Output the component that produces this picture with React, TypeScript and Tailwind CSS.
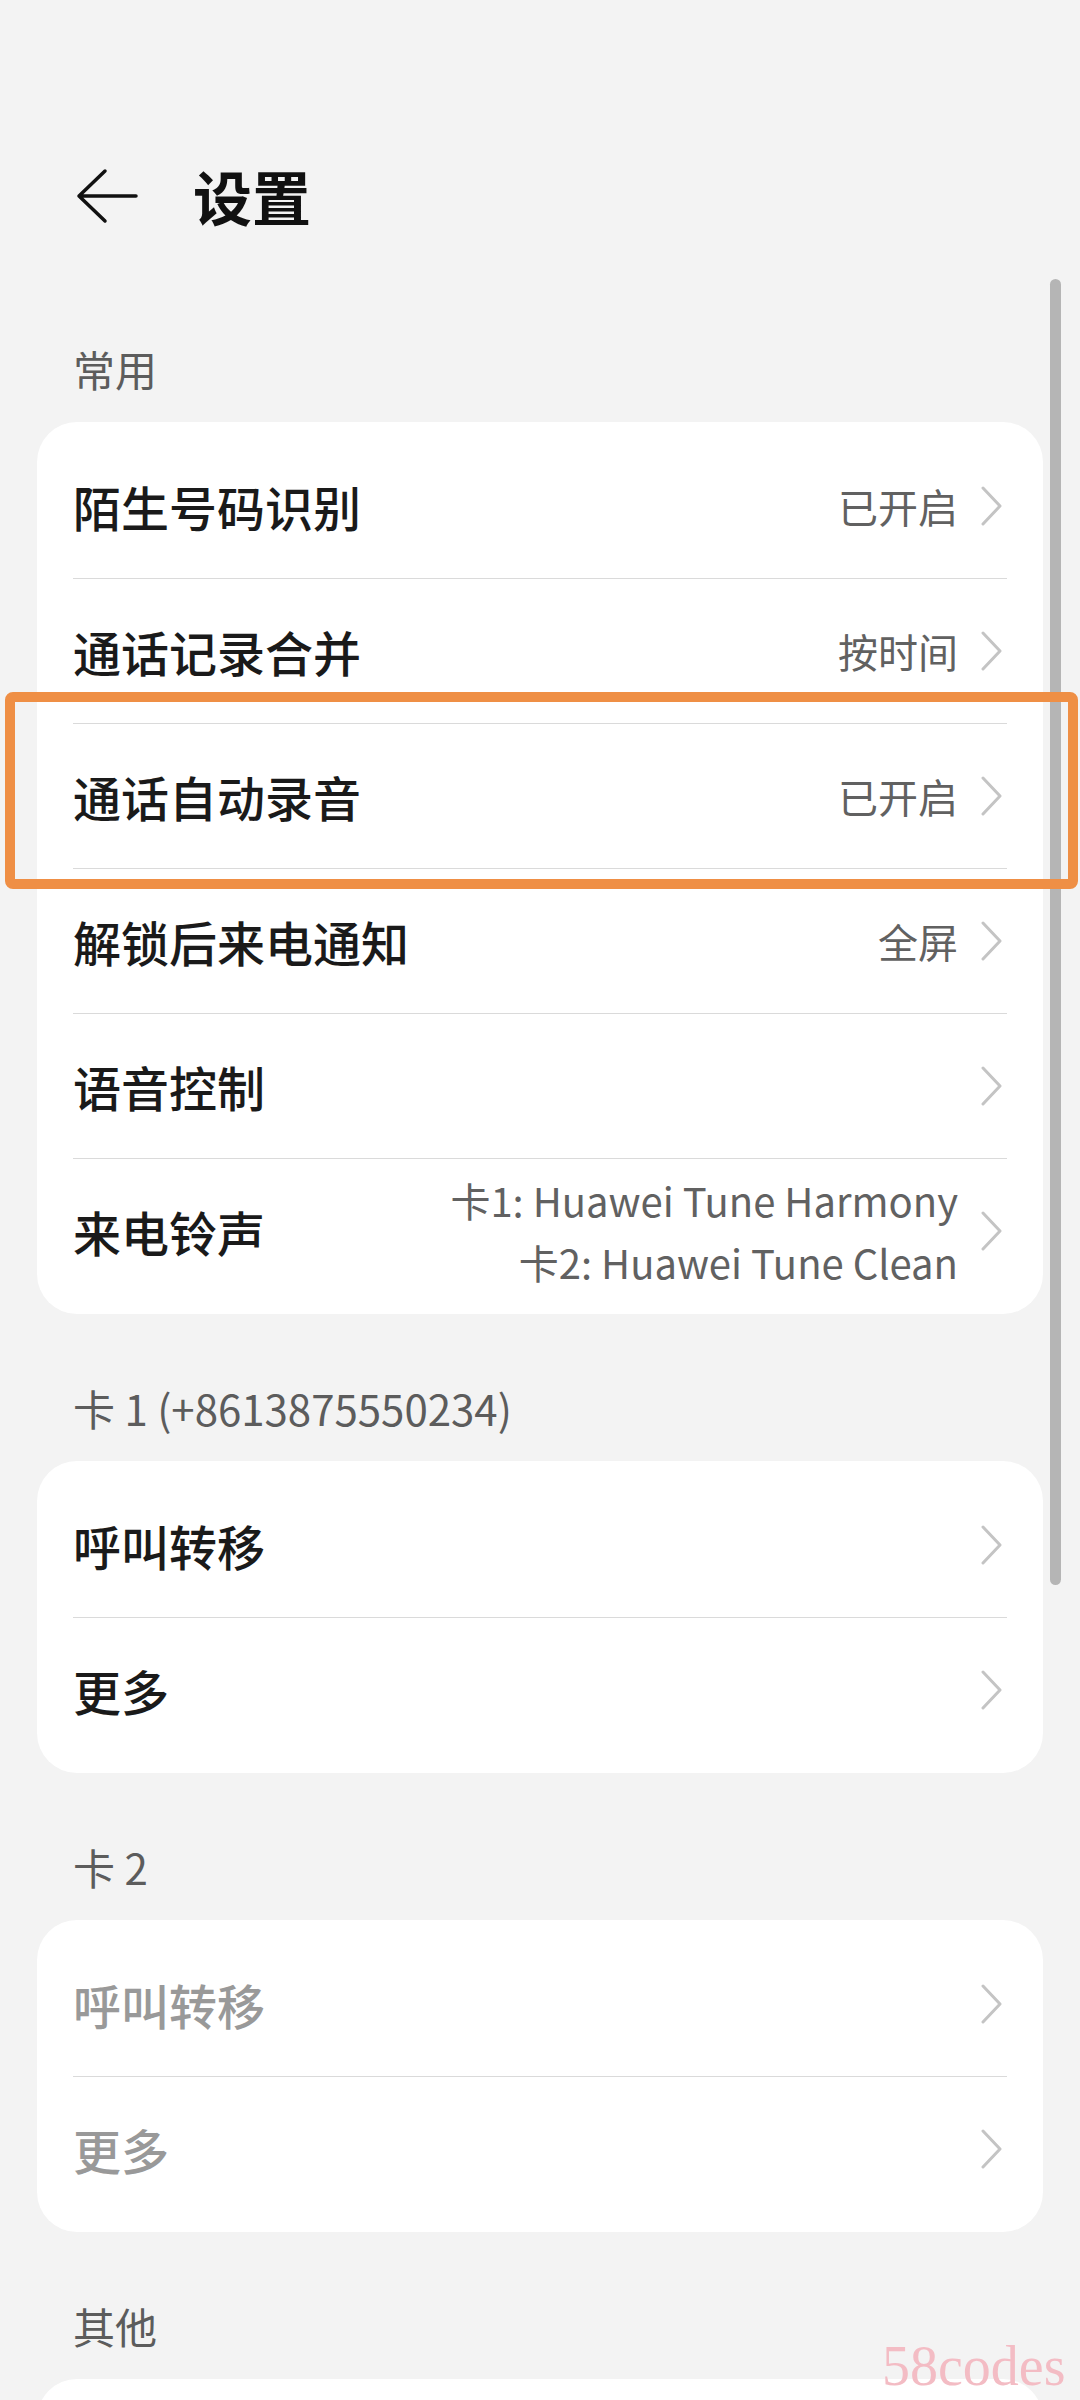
import React from "react"

interface Row {
  title: string
  value?: string
  lines?: string[]
  disabled?: boolean
}

const common: Row[] = [
  { title: "陌生号码识别", value: "已开启" },
  { title: "通话记录合并", value: "按时间" },
  { title: "通话自动录音", value: "已开启" },
  { title: "解锁后来电通知", value: "全屏" },
  { title: "语音控制" },
  { title: "来电铃声", lines: ["卡1: Huawei Tune Harmony", "卡2: Huawei Tune Clean"] },
]

const card1: Row[] = [{ title: "呼叫转移" }, { title: "更多" }]
const card2: Row[] = [
  { title: "呼叫转移", disabled: true },
  { title: "更多", disabled: true },
]

const Chevron = () => (
  <svg width="22" height="42" viewBox="0 0 22 42" className="ml-[22px] mr-[5px] shrink-0">
    <path d="M3 3 L20 21 L3 39" fill="none" stroke="#c4c4c4" strokeWidth="3" strokeLinecap="round" strokeLinejoin="round" />
  </svg>
)

const SectionLabel = ({ text, first }: { text: string; first?: boolean }) => (
  <div className={first ? "pt-[123px] pb-[33px] px-[73px]" : "pt-[74px] pb-[33px] px-[73px]"}>
    <div className="text-[42px] leading-[40px] text-[#5c5c5c]">{text}</div>
  </div>
)

const Card = ({ rows }: { rows: Row[] }) => (
  <div className="mx-[37px] rounded-[40px] bg-white px-[36px] py-[11px]">
    {rows.map((row, i) => (
      <div
        key={i}
        className={`flex h-[145px] items-center justify-between ${i > 0 ? "border-t border-[#dadada]" : ""}`}
      >
        <span
          className={`text-[48px] leading-none font-medium ${row.disabled ? "text-[#999999]" : "text-[#1a1a1a]"}`}
        >
          {row.title}
        </span>
        <div className="flex items-center">
          {row.value && <span className="text-[40px] leading-none text-[#616161]">{row.value}</span>}
          {row.lines && (
            <div className="text-right text-[40px] leading-[62px] text-[#616161]">
              {row.lines.map((l) => (
                <div key={l}>{l}</div>
              ))}
            </div>
          )}
          <Chevron />
        </div>
      </div>
    ))}
  </div>
)

export default function App() {
  return (
    <div className="relative h-[2400px] w-[1080px] overflow-hidden bg-[#f3f3f3] font-['Noto_Sans_CJK_SC','Noto_Sans',sans-serif]">
      <header className="mt-[166px] flex h-[60px] items-center">
        <svg width="62" height="56" viewBox="0 0 62 56" className="ml-[76px]">
          <path
            d="M29 3 L3 28 L29 53 M3 28 H60"
            fill="none"
            stroke="#111"
            strokeWidth="3.5"
            strokeLinecap="round"
            strokeLinejoin="round"
          />
        </svg>
        <h1 className="ml-[55px] text-[59px] leading-[60px] font-bold text-[#111]">设置</h1>
      </header>

      <SectionLabel text="常用" first />
      <Card rows={common} />

      <SectionLabel text="卡 1 (+8613875550234)" />
      <Card rows={card1} />

      <SectionLabel text="卡 2" />
      <Card rows={card2} />

      <SectionLabel text="其他" />
      <div className="mx-[37px] h-[200px] rounded-[40px] bg-white" />

      {/* scroll indicator */}
      <div className="absolute left-[1050px] top-[279px] h-[1306px] w-[11px] rounded-full bg-[#b5b5b5]" />

      {/* highlight annotation */}
      <div className="absolute left-[5px] top-[692px] h-[197px] w-[1073px] rounded-[8px] border-[10px] border-[#ef8f45]" />

      <div className="absolute left-[882px] top-[2338px] font-['Liberation_Serif',serif] text-[56px] leading-none text-[#f3bcc4]">
        58codes
      </div>
    </div>
  )
}
